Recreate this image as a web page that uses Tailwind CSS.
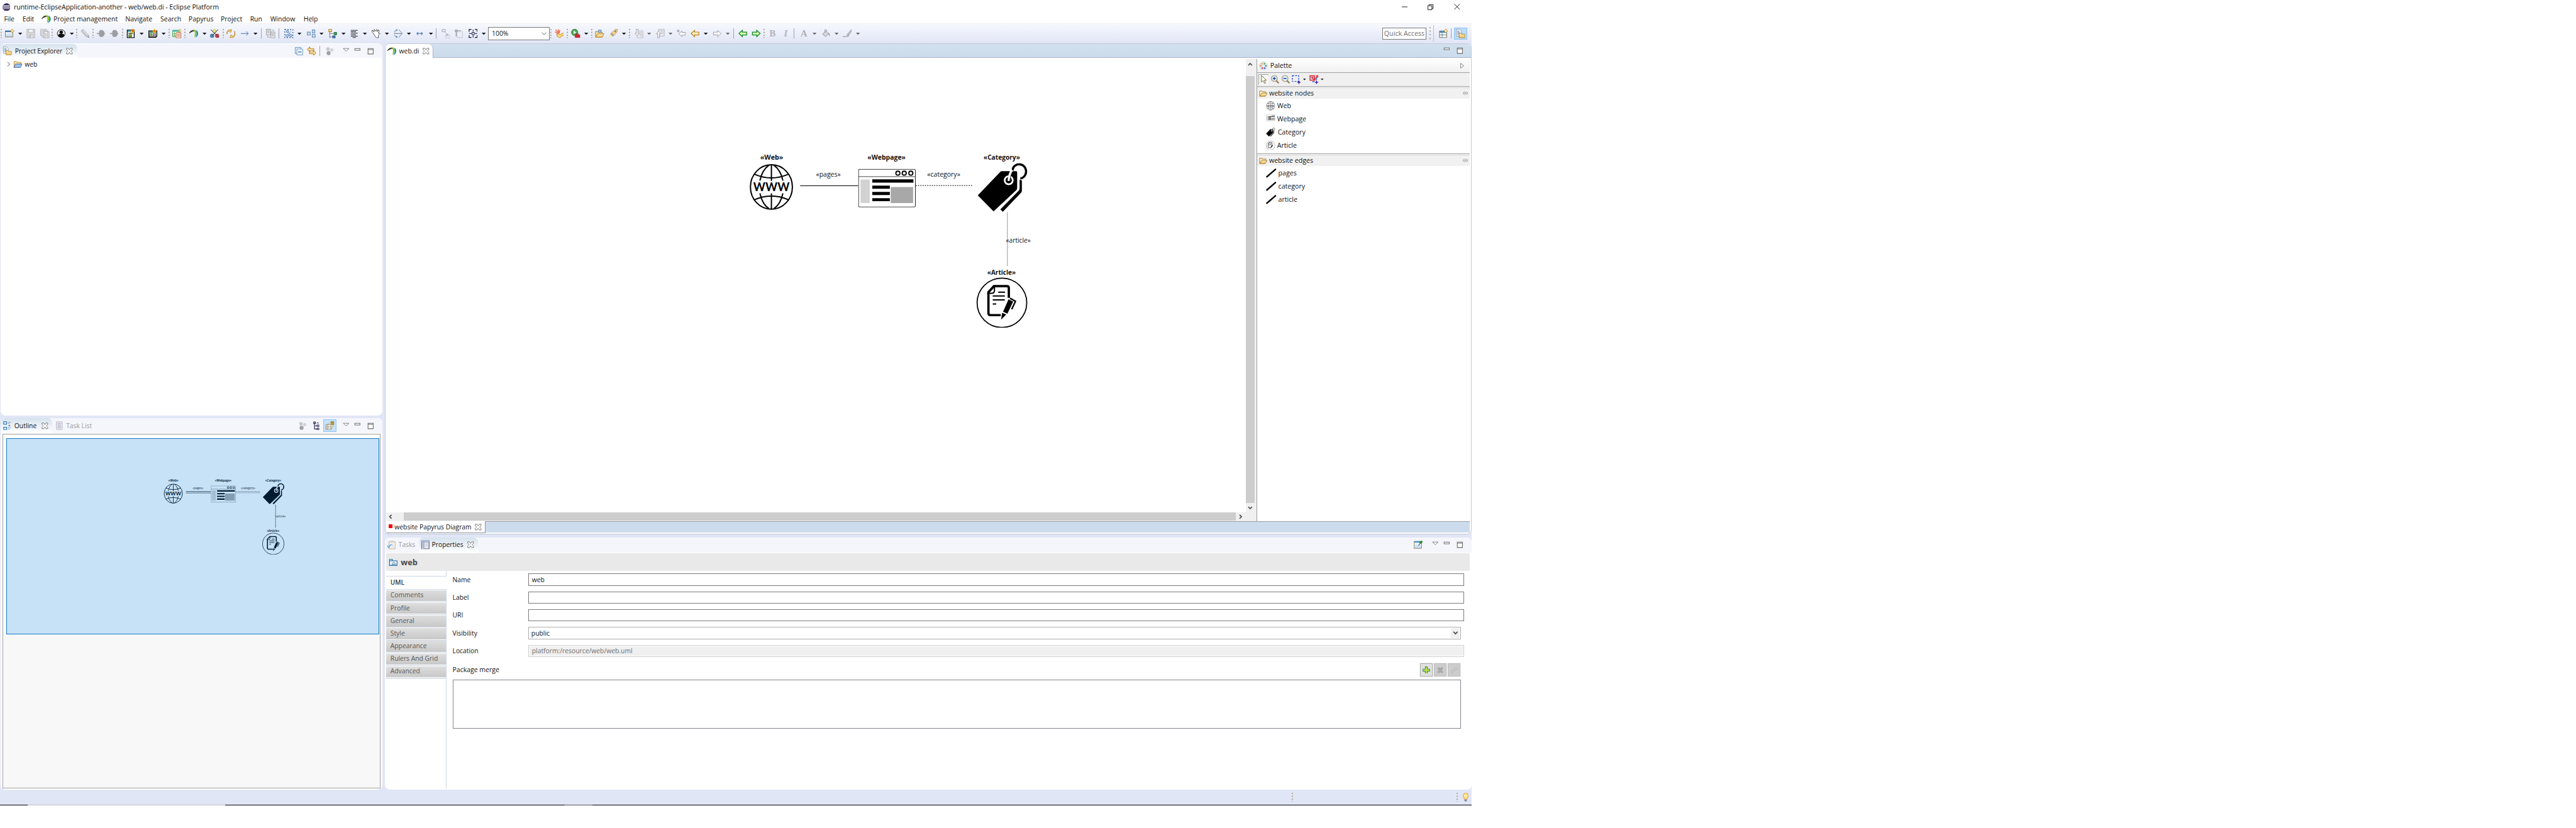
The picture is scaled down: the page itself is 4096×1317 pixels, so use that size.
<!DOCTYPE html>
<html lang="en">
<head>
<meta charset="utf-8">
<title>runtime-EclipseApplication-another - web/web.di - Eclipse Platform</title>
<script src="https://cdn.jsdelivr.net/npm/@tailwindcss/browser@4"></script>
</head>
<body class="bg-white overflow-hidden">
<!-- icon sprite -->
<svg width="0" height="0" class="absolute" aria-hidden="true">
<defs>
<linearGradient id="gold" x1="0" y1="0" x2="0" y2="1"><stop offset="0" stop-color="#fff3c8"/><stop offset="1" stop-color="#f0bf55"/></linearGradient>
<linearGradient id="sky" x1="0" y1="0" x2="0" y2="1"><stop offset="0" stop-color="#ffffff"/><stop offset="1" stop-color="#b9d3f0"/></linearGradient>
<symbol id="handle" viewBox="0 0 3 16"><g fill="#a39c86"><path d="M0 0h2v2H0zM0 5h2v2H0zM0 10h2v2H0zM0 14.500h2v1.500H0z"/></g></symbol>
<symbol id="sep" viewBox="0 0 1 18"><path d="M0 0h1v18H0z" fill="#8d909b"/></symbol>
<symbol id="arr" viewBox="0 0 7 4"><path d="M0 0h7L3.500 4z" fill="#1c1f26"/></symbol>
<symbol id="arrg" viewBox="0 0 7 4"><path d="M0 0h7L3.500 4z" fill="#6d6f76"/></symbol>
<symbol id="new" viewBox="0 0 16 16"><path d="M.5 3.500h13v10.500H.5z" fill="url(#sky)" stroke="#8d7a45"/><path d="M0 3h12v2.500H0z" fill="#3f73b5"/><path d="M12.500 0l1.300 2.200L16 3.500l-2.200 1.300L12.500 7l-1.300-2.200L9 3.500l2.200-1.300z" fill="#ffe9a0" stroke="#b08a2a" stroke-width=".8"/></symbol>
<symbol id="save" viewBox="0 0 16 16"><path d="M1 .5h13.500v15H1z" fill="#dcdcde" stroke="#aeb0b4"/><path d="M4 .5h8v6H4zM4.500 10.500h7v5h-7z" fill="#f4f4f5" stroke="#aeb0b4"/><path d="M6 11h2v4H6z" fill="#aeb0b4"/></symbol>
<symbol id="saveall" viewBox="0 0 16 16"><path d="M.5.5h10v11H.5z" fill="#e8e8ea" stroke="#b4b6ba"/><path d="M2.500 2.500h10v11h-10z" fill="#e8e8ea" stroke="#b4b6ba"/><path d="M5 4.500h10.500v11H5z" fill="#dcdcde" stroke="#aeb0b4"/><path d="M7.500 4.500h5.500v4H7.500zM8 12h5v3.500H8z" fill="#f4f4f5" stroke="#aeb0b4"/></symbol>
<symbol id="person" viewBox="0 0 16 16"><circle cx="8" cy="8" r="6.800" fill="#eee" stroke="#111" stroke-width="1"/><circle cx="8" cy="5.800" r="3" fill="#111"/><path d="M2.500 12c0-3 2.500-3.600 5.500-3.600s5.500.6 5.500 3.600C12 14 10 14.800 8 14.800S4 14 2.500 12z" fill="#111"/></symbol>
<symbol id="pencil" viewBox="0 0 16 16"><path d="M1 3.500L4.500.5l9 9.500 1.500 5-5-1.500z" fill="#c2c4c8" stroke="#9a9ca1" stroke-width=".8"/><path d="M3 2l9 9.500M5 1.500l8 9" stroke="#ededf0"/><path d="M13 13l3 3" stroke="#888"/></symbol>
<symbol id="oct" viewBox="0 0 16 16"><path d="M1 7h4V4l2-2h4l3 3v2h1.500v2H14v2l-3 3H7l-2-2V9H1z" fill="#9d9ea2"/></symbol>
<symbol id="blk" viewBox="0 0 16 16"><path d="M1.500 2h12v13.200h-12z" fill="#fff" stroke="#000" stroke-width="1.400"/><path d="M2 2.500h11V5H2z" fill="#2b8f9b"/><path d="M4 7h7v1.500H4zM4 10h5v4H4z" fill="#6dbb21" stroke="#111" stroke-width=".6"/><path d="M10.500 0v7M7.500 3.500h7" stroke="#ffb300" stroke-width="2"/><circle cx="10.800" cy="3.500" r="1.200" fill="#e0392b"/></symbol>
<symbol id="tbl" viewBox="0 0 16 16"><path d="M.8 3.500h14v9l-2 2H.8z" fill="#fff" stroke="#000" stroke-width="1.400"/><path d="M1.500 4h13v2.500h-13z" fill="#2b8f9b"/><path d="M3 7v7M6 7v7M9 7v7M12 7v7M1 9h13M1 12h13" stroke="#333" stroke-width=".9"/><path d="M3 7h3v2H3zM3 10h3v2H3z" fill="#9ac63c"/><path d="M10.500 0v7.500M7 3.800h7" stroke="#ffb300" stroke-width="2.200"/><circle cx="10.500" cy="3.800" r="1.200" fill="#e0392b"/></symbol>
<symbol id="tab2" viewBox="0 0 16 16"><path d="M.5 2.500h11v11H.5z" fill="#fff" stroke="#3a9a3a"/><path d="M0 2h12v3H0z" fill="#49b7a3"/><path d="M3.500 5v9M1 8h5M1 11h5" stroke="#5aa84c"/><path d="M6.500 6.500h8.500v9H6.500z" fill="#fff" stroke="#b2501f"/><path d="M8 9h5.500M8 11h5.500M8 13h5.500" stroke="#c4622f"/><path d="M13 0l1 2 2 1-2 1-1 2-1-2-2-1 2-1z" fill="#ffe08a" stroke="#b08a2a" stroke-width=".6"/></symbol>
<symbol id="pap" viewBox="0 0 16 16"><path d="M0 7.500C2.500 2.500 7 1.500 10 3.500 6.500 3.200 3 5 0 7.500z" fill="#222" stroke="#222" stroke-width=".8"/><path d="M6 1.800C10 .5 13 3 13 7c0 3.500-2.500 6.500-4 8 0-3 .8-5 .8-7.500C9.800 4.500 8.500 3 6 1.800z" fill="#97c11f"/><path d="M11.500 2c3 1 4.500 4 4 7-.4 2.800-2.500 5-5 6.200C12.500 11.500 14 7 11.500 2z" fill="#1d93bd"/></symbol>
<symbol id="balls" viewBox="0 0 16 16"><circle cx="7.500" cy="3.800" r="3" fill="#f3e28c" stroke="#b5a14a" stroke-width=".7"/><circle cx="3.500" cy="12" r="3.300" fill="#5b8fbd" stroke="#2e638f" stroke-width=".7"/><circle cx="12.300" cy="12" r="3.300" fill="#e0464c" stroke="#9c2328" stroke-width=".7"/><path d="M1 1l14.500 14M14 1L3 13" stroke="#222" stroke-width="1"/></symbol>
<symbol id="refresh" viewBox="0 0 16 16"><path d="M1 9V6.500C1 4 3.500 3.500 5.500 4.500L7.500 6 9 1.500 3.500 2C1.500 4 .5 6 1 9zM14.500 4v5c0 3-3 4-5 3L8 10l-1.500 5.500 6-1C15 12 16 8 14.500 4z" fill="#fbd97a" stroke="#b8801d" stroke-width="1"/></symbol>
<symbol id="right" viewBox="0 0 16 16"><path d="M1 8h13M10.500 4.500L14 8l-3.500 3.500" fill="none" stroke="#3a62a8"/></symbol>
<symbol id="copyd" viewBox="0 0 16 16"><path d="M.5.5H8v10H.5zM8.500 5.500h7v10h-7z" fill="#f2f2f4" stroke="#8f9196"/><path d="M2 3h4.500M2 5h4.500M2 7h4.500M10 8h4M10 10h4M10 12h4M3 12v2.500h4M10 2h3v2" stroke="#9c9ea3" fill="none"/></symbol>
<symbol id="selall" viewBox="0 0 16 16"><path d="M1 1h14v14H1z" fill="none" stroke="#2a5a9a" stroke-width="1.600" stroke-dasharray="2 2.600"/><path d="M4 3l8 9M12 4L5 12M5 12h7" stroke="#5480b5"/><circle cx="5" cy="11.500" r="2" fill="#cfe0f3" stroke="#4674ae"/><circle cx="11.500" cy="11.500" r="2" fill="#cfe0f3" stroke="#4674ae"/><circle cx="5.500" cy="4.500" r="1.800" fill="#cfe0f3" stroke="#4674ae"/></symbol>
<symbol id="boxes" viewBox="0 0 16 16"><path d="M.7 5.700h5v5h-5zM9.300 1.700h4.500v5H9.300zM9.300 9.300h5v5h-5z" fill="#cfe1f5" stroke="#6f93bd" stroke-width="1.300"/></symbol>
<symbol id="tree" viewBox="0 0 16 16"><path d="M1 .8h4.500v4H1z" fill="#fdf2b8" stroke="#a9832b" stroke-width="1.300"/><path d="M10 6h4.500v4.200H10z" fill="#3d9b55" stroke="#256c38"/><path d="M7.500 12H12v4H7.500z" fill="#4a7fc1" stroke="#2a5290"/><path d="M2.500 6v9M2.500 8H9M2.500 14H6" stroke="#333" stroke-dasharray="1.500 1"/></symbol>
<symbol id="lines" viewBox="0 0 16 16"><path d="M2 2.500h12M2 5h9M2 7.500h12M2 10h9M2 12.500h12M5 15h6" stroke="#222" stroke-width="1.100"/></symbol>
<symbol id="ghost" viewBox="0 0 16 16"><path d="M1 2l3 3.500L4.500.8l2 3 2.500-3 .5 4 2.500-3.500 1 3-1.500 3 3 .5-3 3.500.5 4H8L5.500 12 3 8 .7 5z" fill="#fff" stroke="#222" stroke-width="1" stroke-dasharray="2.500 .6"/></symbol>
<symbol id="flip" viewBox="0 0 16 16"><path d="M1 8h14" stroke="#111" stroke-dasharray="1.500 1.200" stroke-width="1.200"/><path d="M8.500 1L15 8l-6.500 7" fill="none" stroke="#5480b5"/><path d="M5.500 2C2.500 2.500 1.500 4 2 6M5.500 14C2.500 13.500 1.500 12 2 10M4 .5L6.500 2 4.500 4M4 15.500L6.500 14l-2-2" fill="none" stroke="#3a78b5"/></symbol>
<symbol id="lr" viewBox="0 0 16 16"><path d="M3 8h10M5.500 5.500L3 8l2.500 2.500M10.500 5.500L13 8l-2.500 2.500" fill="none" stroke="#3a72b5" stroke-width="1.100"/></symbol>
<symbol id="g1" viewBox="0 0 16 16"><path d="M1 1h5.500v4H1zM6 6l5 5M11 8v3H8" fill="none" stroke="#9b9da2"/><path d="M7.500 11h8v4.500h-8z" fill="none" stroke="#9b9da2" stroke-dasharray="1 1"/></symbol>
<symbol id="g2" viewBox="0 0 16 16"><path d="M1 2h3v3H1zM4 3h7M2.500 5v8" fill="none" stroke="#8e9095" stroke-width="1.200"/><path d="M4 5h9.500v10H4z" fill="none" stroke="#9b9da2" stroke-dasharray="1.500 1.500"/></symbol>
<symbol id="g3" viewBox="0 0 16 16"><path d="M1 5V1h4M11 1h4v4M15 11v4h-4M5 15H1v-4" fill="none" stroke="#111" stroke-width="1.300"/><path d="M6 6h4v4H6z" fill="none" stroke="#111"/><path d="M8 1v4M8 11v4M1 8h4M11 8h4" stroke="#2a2a9a" stroke-width="1.300"/></symbol>
<symbol id="burst" viewBox="0 0 16 16"><path d="M8 7L1.500 1.500M8 7L6 .5M8 7L.5 5.500M8 7L2.500 9M8 7l1-5" stroke="#ee6a45" stroke-width="1.500"/><path d="M4 10l3-2 1 2 3-1 4-2 1 2-2 3-3 1-2 3-2-2-3-1z" fill="#fbd97a" stroke="#bb8420" stroke-width=".9"/></symbol>
<symbol id="run" viewBox="0 0 16 16"><circle cx="6.300" cy="6" r="5.600" fill="#4ba551" stroke="#2c7a33" stroke-width=".9"/><path d="M4.500 3l4.500 3-4.500 3z" fill="#fff"/><path d="M7 10h8.500v5H7z" fill="#d2242a" stroke="#94151a" stroke-width=".6"/><path d="M9.500 10V8.500h3.500V10" fill="none" stroke="#94151a"/></symbol>
<symbol id="folder" viewBox="0 0 16 16"><path d="M1 14V4.500h4l1 1.500h7v2" fill="#fbe2a0" stroke="#a5792a"/><path d="M6 2h5v4H6z" fill="#a9c5e3" stroke="#5f83ab"/><path d="M1 14.500L4.500 8.500H16l-3.500 6z" fill="url(#gold)" stroke="#a5792a"/></symbol>
<symbol id="rocket" viewBox="0 0 16 16"><path d="M4.500 7L11 .8l4.200-.3-.3 4L9.500 11z" fill="#f7d08a" stroke="#b88a3f" stroke-width=".8"/><circle cx="11.500" cy="4.300" r="1.500" fill="#5b86b8"/><path d="M4 7l5 4.500-1.500 2-5-4.500z" fill="#9a9aa0"/><path d="M2.500 10L0 16l5.500-3z" fill="#ffe88f"/></symbol>
<symbol id="doc1" viewBox="0 0 16 16"><path d="M4.500 3.500h10v12h-10z" fill="#ececee" stroke="#b4b6ba"/><path d="M9 7h4M9 9.500h4M9 12h4" stroke="#b4b6ba"/><path d="M3 .5h3v7h2.500L4.500 12 .7 7.500H3z" fill="#f5f5f6" stroke="#9b9da2"/></symbol>
<symbol id="doc2" viewBox="0 0 16 16"><path d="M4.500.5h10v12h-10z" fill="#ececee" stroke="#b4b6ba"/><path d="M6 3h7M9 5.500h4M9 8h4" stroke="#b4b6ba"/><path d="M3 15.500h3v-7h2.500L4.500 4 .7 8.500H3z" fill="#f5f5f6" stroke="#9b9da2"/></symbol>
<symbol id="sback" viewBox="0 0 16 16"><path d="M3.500 8.500L9 3.500V6h6.500v5H9v2.500z" fill="#f5f5f6" stroke="#9b9da2"/><path d="M2.500 1v5M0 3.500h5M.8 1.800l3.500 3.500M4.300 1.800L.8 5.300" stroke="#8f9196" stroke-width=".8"/></symbol>
<symbol id="back" viewBox="0 0 16 16"><path d="M1 8l6-5.500V5.500h7.500v5H7v3z" fill="#fff0c0" stroke="#b8801d" stroke-width="1.300"/></symbol>
<symbol id="fwd" viewBox="0 0 16 16"><path d="M15 8L9 2.500V5.500H1.500v5H9v3z" fill="#f5f5f6" stroke="#9b9da2"/></symbol>
<symbol id="gback" viewBox="0 0 16 16"><path d="M1 8l6-5.500V5.500h7.500v5H7v3z" fill="#d6f7a8" stroke="#128a2c" stroke-width="1.400"/></symbol>
<symbol id="gfwd" viewBox="0 0 16 16"><path d="M15 8L9 2.500V5.500H1.500v5H9v3z" fill="#d6f7a8" stroke="#128a2c" stroke-width="1.400"/></symbol>
<symbol id="B" viewBox="0 0 16 16"><text x="8" y="13.500" text-anchor="middle" font-family="Liberation Serif, serif" font-weight="700" font-size="16" fill="#b0b1b6">B</text></symbol>
<symbol id="I" viewBox="0 0 16 16"><text x="8" y="13.500" text-anchor="middle" font-family="Liberation Serif, serif" font-style="italic" font-size="16" font-weight="700" fill="#b0b1b6">I</text></symbol>
<symbol id="A" viewBox="0 0 16 16"><text x="8" y="13.500" text-anchor="middle" font-family="Liberation Serif, serif" font-size="16" font-weight="700" fill="#aeb0b4">A</text></symbol>
<symbol id="bucket" viewBox="0 0 16 16"><path d="M2 9l6-5.500 5 5-5.500 5z" fill="#d2d3d7" stroke="#96989d"/><path d="M6 6V1.500h3v4" fill="none" stroke="#96989d"/><path d="M12 6.500c3 1 3 4 2.500 7-1-2-1-4-2.500-5z" fill="#96989d"/></symbol>
<symbol id="brush" viewBox="0 0 16 16"><path d="M15 1L9 8l2 2 4-5zM8.500 8.500L6 13.500l4-.5 1-2.500z" fill="#c2c4c8" stroke="#96989d" stroke-width=".8"/><path d="M0 13.500h5" stroke="#96989d" stroke-width="1.300"/></symbol>
<symbol id="persp" viewBox="0 0 16 16"><path d="M1 3.500h12.500v11.500H1z" fill="#fff" stroke="#6c6a4a"/><path d="M1 3.500h12.500v3H1z" fill="#4d84bd"/><path d="M5.500 6v9M1 10.500h12.500" stroke="#4f7f8a"/><path d="M12 0l1.300 2.200L15.500 3.500l-2.200 1.300L12 7l-1.300-2.200L8.500 3.500l2.200-1.300z" fill="#fff3c0" stroke="#b08a2a" stroke-width=".9"/></symbol>
<symbol id="projexp" viewBox="0 0 16 16"><path d="M.5.5h6l3 3v9h-9z" fill="#fff" stroke="#8a9ab5"/><path d="M2 3.500h4M2 5.500h5M2 7.500h4M2 9.500h3" stroke="#4a79b5"/><path d="M5.500 15.500V7.500h3l1 1.500h6v6.500z" fill="url(#gold)" stroke="#a5792a"/></symbol>
<symbol id="close" viewBox="0 0 16 16"><path d="M3 3h3l2 3 2-3h3v2.500L10.500 8l2.500 2.500V13h-3l-2-3-2 3H3v-2.500L5.500 8 3 5.500z" fill="#fff" stroke="#6c6c6c"/></symbol>
<symbol id="colall" viewBox="0 0 16 16"><path d="M1.500 1.500h10v11h-10z" fill="#e4eefa" stroke="#5e8fc0"/><path d="M4.500 4.500h10v10h-10z" fill="#fff" stroke="#5e8fc0"/><path d="M6.500 9.500h6" stroke="#1f5fa8" stroke-width="1.500"/></symbol>
<symbol id="link" viewBox="0 0 16 16"><path d="M.8 5L5 .8V3.500h7v3H5V9zM15.500 11l-4.200-4.200v2.700H4.500v3h6.800v3z" fill="#fff0c0" stroke="#b8801d" stroke-width="1.100"/></symbol>
<symbol id="gballs" viewBox="0 0 16 16"><circle cx="5" cy="4.500" r="3" fill="#c6c7c9"/><circle cx="11.500" cy="6" r="3" fill="#d4d5d7"/><circle cx="6" cy="11.500" r="3.500" fill="#9fa0a3"/></symbol>
<symbol id="menu" viewBox="0 0 16 16"><path d="M3 3.500h10L8 8z" fill="#fff" stroke="#777"/></symbol>
<symbol id="min" viewBox="0 0 16 16"><path d="M3.500 3.500h9v3h-9z" fill="#fff" stroke="#6c6c6c" stroke-width="1.100"/></symbol>
<symbol id="max" viewBox="0 0 16 16"><path d="M3.500 3.500h9v9.500h-9zM3.500 5.500h9" fill="#fff" stroke="#6c6c6c" stroke-width="1.200"/></symbol>
<symbol id="prj" viewBox="0 0 16 16"><path d="M1.500 13V3h4l1 1.500h7V8" fill="#fbe2a0" stroke="#b08a45"/><path d="M1 13.500L4 7.500h11.500l-3 6z" fill="#9fc0ea" stroke="#3d69a8"/></symbol>
<symbol id="outl" viewBox="0 0 16 16"><path d="M1 1h5v4H1zM1 10.500h5v4H1z" fill="#fff" stroke="#2d77b5" stroke-width="1.300"/><path d="M8 2h6M8 4h3M8 11h6M8 13.500h4" stroke="#8aa0bd"/><path d="M9.500 6.500H12v2H9.500z" fill="#2d77b5"/></symbol>
<symbol id="task" viewBox="0 0 16 16"><path d="M3 1h10v13l-2 1-1.500-1L8 15l-1.500-1L5 15l-2-1z" fill="#ecebf4" stroke="#b3b2c6"/><path d="M5 4h6M5 6.500h6M5 9h6M5 11.500h6" stroke="#a3a2bb"/></symbol>
<symbol id="otree" viewBox="0 0 16 16"><path d="M3 1.500h3v2.500H3zM4.500 4v9.500H9M4.500 8H9M9 6.500h3V9H9zM9 12h3v2.500H9z" fill="none" stroke="#222250" stroke-width="1.200"/><path d="M8 3h4" stroke="#222250"/></symbol>
<symbol id="ovw" viewBox="0 0 16 16"><path d="M1.500 6.500L11 1h3.500v6L10 14.500H1.500z" fill="#e9e2bd" stroke="#a39a6d" stroke-width=".7"/><path d="M1.500 6h8.500v9H1.500zM1.500 9H10M1.500 12H10M4.500 6v9" fill="#fff" stroke="#8f8d7a"/><path d="M10.500 1H15v4.500h-4.500zM12.700 1v4.500" fill="#ffe25a" stroke="#6b5c14"/></symbol>
<symbol id="taskp" viewBox="0 0 16 16"><path d="M3.500 2.500h11v13h-11z" fill="#efe0cd" stroke="#cfb38d"/><path d="M6 1h6v3H6z" fill="#c8d4e2"/><path d="M5.500 5h7.500v9H5.500z" fill="#fff"/><path d="M8 7h4M8 9.500h4M8 12h4" stroke="#a9bdd6"/><path d="M1 9.500l2.500 3.500L8 7" fill="none" stroke="#6fb4e2" stroke-width="2"/></symbol>
<symbol id="props" viewBox="0 0 16 16"><path d="M1.500 1.500h13v13.500h-13z" fill="#fff" stroke="#535a70" stroke-width="1.200"/><path d="M1.500 1.500h13V4h-13z" fill="#b9c4dd"/><path d="M2 4h3.500v11H2z" fill="#cdd6e8"/><path d="M5.500 2v13M2 4.500h12.500M2 7h12.500M2 9.500h12.500M2 12h12.500" stroke="#8d97b3" stroke-width=".8"/></symbol>
<symbol id="pkg" viewBox="0 0 16 16"><path d="M1.500 13.500V3h5v2.500h8v8zM1.500 5.500h6" fill="#eef5fc" stroke="#1c659e" stroke-width="1.200"/><path d="M5.500 11.500L9 7.500l3 4z" fill="#fff" stroke="#1c659e" stroke-width=".9"/></symbol>
<symbol id="pin" viewBox="0 0 16 16"><path d="M.5 2.500h13v12H.5z" fill="url(#sky)" stroke="#9b8a5c"/><path d="M.5 2h10v2.500H.5z" fill="#4f89cc"/><path d="M8 10l3-4" stroke="#333"/><path d="M9 4.500l3-3.500 3.500 1-1 3-3 2z" fill="#2e8b3a"/></symbol>
<symbol id="palt" viewBox="0 0 16 16"><circle cx="8" cy="8" r="7.300" fill="#e6eefa" stroke="#b4c8e4"/><circle cx="5.500" cy="4" r="1.500" fill="#f0a81c"/><circle cx="10" cy="4" r="1.500" fill="#4ca62f"/><circle cx="3.500" cy="8" r="1.500" fill="#e88718"/><circle cx="12.500" cy="8" r="1.500" fill="#3a9a2b"/><circle cx="6" cy="12" r="1.500" fill="#dc3535"/><circle cx="10.300" cy="12" r="1.500" fill="#2e62cf"/></symbol>
<symbol id="cursor" viewBox="0 0 16 16"><path d="M4 1v12l3-3 2.500 5 2-1L9 9.500h4z" fill="#fffbe8" stroke="#6d6541"/></symbol>
<symbol id="zin" viewBox="0 0 16 16"><path d="M10 10l4.500 4.500" stroke="#a07a4a" stroke-width="2.500"/><circle cx="6.800" cy="6.300" r="5.200" fill="#e3eefa" stroke="#96906e" stroke-width="1.200"/><path d="M4 6.300h5.500M6.800 3.500V9" stroke="#2549a5" stroke-width="1.600"/></symbol>
<symbol id="zout" viewBox="0 0 16 16"><path d="M10 10l4.500 4.500" stroke="#a07a4a" stroke-width="2.500"/><circle cx="6.800" cy="6.300" r="5.200" fill="#e3eefa" stroke="#96906e" stroke-width="1.200"/><path d="M4 6.300h5.500" stroke="#2549a5" stroke-width="1.600"/></symbol>
<symbol id="marq" viewBox="0 0 16 16"><path d="M1 1.500h11v10H1z" fill="none" stroke="#1a3fe0" stroke-width="1.300" stroke-dasharray="3 2"/><path d="M12.500 10v6M9.500 13h6" stroke="#2a1a8a" stroke-width="1.400"/></symbol>
<symbol id="marr" viewBox="0 0 16 16"><path d="M1 1.500h8v8H1z" fill="#c8d8fa" stroke="#e01818" stroke-width="1.400"/><path d="M3 4h4M5 4v4M9 8l4-5M12.500 1.500H15V4h-2.500zM7.500 6.500H10V9H7.500z" stroke="#e01818" stroke-width="1.200" fill="none"/><path d="M5 12h4M12.500 5v4" stroke="#1a3fe0" stroke-width="1.300"/><path d="M12.500 10v6M9.500 13h6" stroke="#2a1a8a" stroke-width="1.400"/></symbol>
<symbol id="ofold" viewBox="0 0 16 13"><path d="M1 12V2h4.500l1 1.500h6V6" fill="#fdf0cc" stroke="#9a6a1c"/><path d="M1 12L5 6h10.500l-4 6z" fill="url(#gold)" stroke="#9a6a1c"/></symbol>
<symbol id="edge" viewBox="0 0 18 16"><path d="M1.500 14.500L16.500 1.500" stroke="#000" stroke-width="2.600" stroke-linecap="round"/></symbol>
<symbol id="pinh" viewBox="0 0 10 7"><path d="M3.500.7L.8 3.500l2.700 2.800M6.500.7l2.700 2.800-2.700 2.800M3.500 3.500L5 2l1.500 1.500L5 5z" fill="none" stroke="#777" stroke-width=".9"/></symbol>
<symbol id="bulb" viewBox="0 0 12 16"><path d="M6 1a4.300 4.300 0 0 0-2.500 7.800V11h5V8.800A4.300 4.300 0 0 0 6 1z" fill="#ffe9a0" stroke="#eca93a" stroke-width="1.200"/><path d="M4 11.500h4V14l-1 1H5l-1-1z" fill="#7c8796"/></symbol>
<symbol id="upc" viewBox="0 0 16 16"><path d="M4.500 10L8 6.500 11.500 10" fill="none" stroke="#505050" stroke-width="2"/></symbol>
<symbol id="dnc" viewBox="0 0 16 16"><path d="M4.500 6.500L8 10l3.500-3.500" fill="none" stroke="#505050" stroke-width="2"/></symbol>
<symbol id="lfc" viewBox="0 0 16 16"><path d="M9.500 4.500L6 8l3.500 3.500" fill="none" stroke="#505050" stroke-width="2"/></symbol>
<symbol id="rtc" viewBox="0 0 16 16"><path d="M6.500 4.500L10 8l-3.500 3.500" fill="none" stroke="#505050" stroke-width="2"/></symbol>

<!-- diagram node pictures -->
<symbol id="n-web" viewBox="0 0 80 80"><g fill="none" stroke="#000" stroke-width="2.200"><ellipse cx="40" cy="40" rx="36.500" ry="38.700"/><path d="M10 17.500Q40 31 70 17.500M10 62.500Q40 49 70 62.500M40 1.500v28M40 51v28M36 2Q24 10 20 29M44 2Q56 10 60 29M36 78Q24 70 20 51M44 78Q56 70 60 51"/></g><text x="8.500" y="47.500" textLength="63" lengthAdjust="spacingAndGlyphs" font-family="Lato, sans-serif" font-weight="700" font-size="21" fill="#000">WWW</text></symbol>
<symbol id="n-page" viewBox="0 0 100 67"><rect x=".6" y=".6" width="98.800" height="65.800" rx="2" fill="#fff" stroke="#222" stroke-width="1.100"/><path d="M0 13.500h100" stroke="#333"/><g fill="#fff" stroke="#000" stroke-width="2"><circle cx="69" cy="7.500" r="3.500"/><circle cx="80" cy="7.500" r="3.500"/><circle cx="91.500" cy="7.500" r="3.500"/></g><path d="M4 18.500h16v41H4z" fill="#d2d2d2"/><path d="M56.500 31.500h39v28h-39z" fill="#a8a8a8"/><path d="M24.500 18.300H96v5.700H24.500zM24.500 29.300H55v5.400H24.500zM24.500 40.200H55v5.300H24.500zM24.500 51H55v5.300H24.500z" fill="#000"/></symbol>
<symbol id="n-tag" viewBox="0 0 88 86"><path d="M1 56L40 15.500Q41 14 43 14H67.500Q69.500 14 69.500 15.500V43Q69.500 45 68.500 46.500L28.500 84z" fill="#000"/><path d="M74 29l3.500 1.500V48q0 2-1.500 3.500L44.500 84.500 40.500 80.500 72.500 48q1.500-2 1.500-4z" fill="#000" stroke="#000" stroke-width=".5"/><path d="M61.500 13C62 4 70 1 76 2.500C84 4.500 87 14 83.500 20.500Q81 25.500 75 27" fill="none" stroke="#000" stroke-width="3.800"/><circle cx="54.800" cy="29.800" r="8.500" fill="#fff"/><circle cx="54.800" cy="29.800" r="5.500" fill="#000"/><path d="M55 31Q56 18 61 12" fill="none" stroke="#fff" stroke-width="4.500"/><path d="M56.500 31Q58 20 61.500 14" fill="none" stroke="#000" stroke-width=".8"/></symbol>
<symbol id="n-art" viewBox="0 0 90 88"><ellipse cx="45" cy="44.500" rx="43.200" ry="43" fill="#fff" stroke="#000" stroke-width="1.900"/><path d="M57 36V19q0-3.500-3.500-3.500H31L21.500 26v36.500q0 3.500 3.500 3.500h18" fill="none" stroke="#000" stroke-width="4"/><path d="M21 28L32 16v7q0 5-5 5z" fill="#fff" stroke="#000" stroke-width="2.200"/><path d="M38.500 26h12M29 32.700h21M29 39.500h21M29 46.500h6" stroke="#000" stroke-width="2.200"/><path d="M56.500 38.500l8 4-10 21-7.500-3.500zM45.500 62l7 3-9 9z" fill="#000"/><path d="M59 36.500l9.500 5.500L62 56" fill="none" stroke="#000" stroke-width="2.600"/></symbol>

<symbol id="diagram" viewBox="0 0 2600 1000" overflow="visible">
<g font-family="Open Sans, Noto Sans, sans-serif" font-size="11.700" fill="#111">
<use href="#n-web" x="1302" y="285.500" width="80" height="80"/>
<use href="#n-page" x="1493" y="294" width="100" height="67"/>
<use href="#n-tag" x="1700" y="284" width="88" height="86"/>
<use href="#n-art" x="1698" y="482.500" width="90" height="88"/>
<path d="M1392 323.500h101" stroke="#000" stroke-width="1.200"/>
<path d="M1593 323h98" stroke="#666" stroke-width="1.700" stroke-dasharray="2 2"/>
<path d="M1752.500 370v94" stroke="#222" stroke-width="1" stroke-dasharray="1 1"/>
<g font-weight="700">
<text x="1322.500" y="278" textLength="40" lengthAdjust="spacingAndGlyphs">«Web»</text>
<text x="1509" y="278" textLength="66.500" lengthAdjust="spacingAndGlyphs">«Webpage»</text>
<text x="1711" y="278" textLength="63.500" lengthAdjust="spacingAndGlyphs">«Category»</text>
<text x="1717.500" y="478" textLength="49.500" lengthAdjust="spacingAndGlyphs">«Article»</text>
</g>
<text x="1419.500" y="308" textLength="43" lengthAdjust="spacingAndGlyphs">«pages»</text>
<text x="1613" y="308" textLength="57.500" lengthAdjust="spacingAndGlyphs">«category»</text>
<text x="1750" y="422" textLength="43" lengthAdjust="spacingAndGlyphs">«article»</text>
</g>
</symbol>
</defs>
</svg>

<div class="[zoom:0.9142857] w-[4480px] h-[1440px] overflow-hidden bg-white text-[11.3px] leading-4 text-[#111] whitespace-nowrap font-['Open_Sans','Noto_Sans',sans-serif]">
<div class="w-[2559px] h-[1401px] flex flex-col bg-[#e1e6f6]">

  <!-- title bar -->
  <header class="h-[24px] bg-white flex items-center shrink-0">
    <svg class="w-[14px] h-[14px] ml-1" viewBox="0 0 14 14"><circle cx="7" cy="7" r="6.700" fill="#2c2255"/><path d="M1.500 4.500h11M1 7h12M1.500 9.500h11" stroke="#fff" stroke-width="1.200"/></svg>
    <span class="ml-[6px] text-[11.600px] tracking-[-0.050px]">runtime-EclipseApplication-another - web/web.di - Eclipse Platform</span>
    <svg class="ml-auto mr-[18px] w-[105px] h-[12px]" viewBox="0 0 105 12"><g fill="none" stroke="#111"><path d="M2 6.500h10"/><path d="M47.500 4.500h7v7h-7zM49.500 4.500v-2h7v7h-2"/><path d="M93.500 1.500l9.500 9.500M103 1.500L93.500 11"/></g></svg>
  </header>

  <!-- menu bar -->
  <nav class="h-[17px] bg-white flex items-center shrink-0 pl-[7px] pt-px text-[11.500px]">
    <span class="w-8">File</span><span class="w-[33px]">Edit</span>
    <svg class="w-[17px] h-[16px] mr-1"><use href="#pap"/></svg>
    <span class="w-[125px]">Project management</span><span class="w-[61px]">Navigate</span><span class="w-[49px]">Search</span><span class="w-[56px]">Papyrus</span><span class="w-[51px]">Project</span><span class="w-[35px]">Run</span><span class="w-[58px]">Window</span><span>Help</span>
  </nav>

  <!-- main toolbar -->
  <div class="h-[34px] shrink-0 border-t-2 border-[#f0f0f0] bg-linear-to-b from-[#f6f8fd] to-[#e1e6f6] flex items-center">
    <div class="flex items-center h-full" data-bar="0|1 handle,9 new,32 arr,46 save,70 saveall,90 handle,98 person,121 arr,133 handle,140 pencil,161 handle,168 oct,191 oct,212 handle,220 blk,243 arr,258 tbl,281 arr,293 handle,300 tab2,321 handle,329 pap,352 arr,366 balls,387 handle,394 refresh,418 right,441 arr,454 sep,463 copyd,485 sep,495 selall,518 arr,534 boxes,556 arr,571 tree,594 arr,609 lines,632 arr,647 ghost,670 arr,685 flip,708 arr,723 lr,746 arr,759 sep,768 g1,791 g2,815 g3,838 arr"></div>
    <div class="ml-1 w-[108px] h-[22px] bg-white border border-[#7a7a7a] flex items-center justify-between pl-[6px] pr-1">100%<svg class="w-[9px] h-[6px]" viewBox="0 0 9 6"><path d="M.7.7l3.800 4 3.800-4" fill="none" stroke="#555"/></svg></div>
    <div class="flex items-center h-full" data-bar="957|958 handle,965 burst,986 handle,994 run,1017 arr,1029 handle,1036 folder,1060 rocket,1083 arr,1095 handle,1104 doc1,1126 arrg,1142 doc2,1164 arrg,1178 sback,1202 back,1225 arr,1240 fwd,1263 arrg,1276 sep,1285 gback,1308 gfwd,1329 handle,1336 B,1359 I,1381 sep,1391 A,1414 arrg,1430 bucket,1452 arrg,1467 brush,1490 arrg"></div>
    <div class="ml-auto w-[76px] h-[21px] bg-white border border-[#7a7a7a] text-[#6d6d6d] flex items-center pl-[2px] text-[11.500px] tracking-[0.100px]">Quick Access</div>
    <svg class="w-[3px] h-[22px] ml-[6px]" viewBox="0 0 3 22"><path d="M0 0h2v2H0zM0 6h2v2H0zM0 12h2v2H0zM0 19h2v2H0z" fill="#a39c86"/></svg>
    <div class="w-[4px] h-[30px] ml-px border-r border-[#b8bfd4] rounded-br"></div>
    <svg class="w-4 h-4 ml-2"><use href="#persp"/></svg>
    <svg class="w-px h-[18px] ml-[5px]"><use href="#sep"/></svg>
    <div class="ml-[5px] mr-[7px] w-[23px] h-[21px] bg-[#bcdcfa] border border-[#90c2f0] flex items-center justify-center"><svg class="w-4 h-4"><use href="#projexp"/></svg></div>
  </div>

  <!-- workbench -->
  <main class="flex flex-1 min-h-0 pl-px gap-1">
    <!-- left column -->
    <div class="w-[664px] flex flex-col gap-1 shrink-0">
      <section class="h-[648px] rounded-lg bg-white overflow-hidden flex flex-col">
        <div class="h-[26px] bg-[#f5f6fb] border-t border-white flex items-center shrink-0">
          <div class="w-[133px] h-full rounded-t-lg bg-linear-to-b from-[#d5e2ee] to-white flex items-center pl-[5px]"><svg class="w-[15px] h-[15px]"><use href="#projexp"/></svg><span class="ml-[5px] w-[83px] tracking-[-0.100px]">Project Explorer</span><svg class="w-4 h-4 ml-[4px]"><use href="#close"/></svg></div>
          <div class="flex items-center h-full" data-bar="134|512 colall,534 link,556 sep,565 gballs,594 menu,614 min,637 max"></div>
        </div>
        <div class="flex items-center h-[22px]">
          <svg class="w-[6px] h-[9px] ml-[11px]" viewBox="0 0 6 9"><path d="M1 .8L4.800 4.500 1 8.200" fill="none" stroke="#a0a0a0" stroke-width="1.500"/></svg>
          <svg class="w-4 h-4 ml-[5px]"><use href="#prj"/></svg><span class="ml-1">web</span>
        </div>
      </section>
      <section class="flex-1 rounded-lg bg-white overflow-hidden flex flex-col">
        <div class="h-[27px] bg-[#f5f6fb] flex items-center shrink-0">
          <div class="w-[90px] h-full rounded-t-lg bg-linear-to-b from-[#d5e2ee] to-white flex items-center pl-[5px]"><svg class="w-4 h-4"><use href="#outl"/></svg><span class="ml-[3px] w-[40px]">Outline</span><svg class="w-4 h-4 ml-[5px]"><use href="#close"/></svg></div>
          <svg class="w-4 h-4 ml-[4px]"><use href="#task"/></svg><span class="ml-[4px] w-[48px] text-[#9a9a9e]">Task List</span>
          <div class="flex items-center h-full" data-bar="163|519 gballs,542 otree,562 hl,594 menu,614 min,637 max"></div>
        </div>
        <div class="mx-[3px] mt-px mb-[2px] w-[658px] flex-1 border border-[#a0a0a0] bg-[#f8f8f8] p-px">
          <div class="bg-white pt-[5px] pl-[5px]">
            <div class="w-[649px] h-[342px] border border-[#0f7bcb] relative overflow-hidden">
              <svg class="absolute inset-0 w-full h-full" viewBox="12 763 647 340"><g transform="translate(-281 717) scale(.434)"><use href="#diagram" width="2600" height="1000"/></g><path d="M323.500 855h43" stroke="#777" stroke-width="1.600"/><path d="M411 855h41M479.500 878v39" stroke="#777" stroke-width="1.400" stroke-dasharray="1.500 1"/></svg>
              <div class="absolute inset-0 bg-[#0078d7]/22"></div>
            </div>
          </div>
        </div>
      </section>
    </div>

    <!-- right column -->
    <div class="w-[1890px] flex flex-col gap-[5px]">
      <!-- editor -->
      <section class="h-[855px] rounded-lg border border-[#c3c8d4] bg-white overflow-hidden flex flex-col shrink-0">
        <div class="h-[25px] bg-linear-to-b from-[#d2e1ee] to-[#cbdbeb] border-b border-[#aab2cc] flex shrink-0">
          <div class="w-[84px] h-[25px] bg-white border-r border-[#aab2cc] rounded-tr-lg flex items-center pl-1"><svg class="w-4 h-4"><use href="#pap"/></svg><span class="ml-1 w-[35px]">web.di</span><svg class="w-4 h-4 ml-[4px]"><use href="#close"/></svg></div>
          <div class="flex items-center h-full" data-bar="754|2508 min,2531 max"></div>
        </div>
        <div class="flex flex-1 min-h-0 pt-[2px] pl-[2px] pr-[2px]">
          <div class="w-[1513px] flex flex-col">
            <div class="flex-1 flex min-h-0">
              <div class="flex-1 relative"><svg class="absolute inset-0 w-full h-full" viewBox="672 103 1495 788"><use href="#diagram" width="2600" height="1000"/></svg></div>
              <div class="w-[18px] bg-[#f0f0f0] flex flex-col items-start"><svg class="w-[15px] h-[18px]"><use href="#upc"/></svg><div class="w-[15px] flex-1 mt-[11px] bg-[#cdcdcd]"></div><svg class="w-[15px] h-[16px]"><use href="#dnc"/></svg></div>
            </div>
            <div class="h-4 bg-[#f0f0f0] flex items-start"><svg class="w-4 h-[15px]"><use href="#lfc"/></svg><div class="ml-[14px] w-[1447px] h-[15px] bg-[#cdcdcd]"></div><svg class="w-4 h-[15px]"><use href="#rtc"/></svg></div>
          </div>
          <!-- palette -->
          <aside class="flex-1 border-l border-[#9c9c9c] flex flex-col text-[11.600px]">
            <div class="h-[24px] bg-linear-to-b from-white to-[#f0f0f0] border-b border-[#a0a0a0] flex items-center pl-1"><svg class="w-[15px] h-[15px]"><use href="#palt"/></svg><span class="ml-1">Palette</span><svg class="ml-auto mr-[9px] w-[7px] h-[10px]" viewBox="0 0 7 10"><path d="M.7.7v8.600L6 5z" fill="#fff" stroke="#777"/></svg></div>
            <div class="h-[24px] bg-[#f0f0f0] border-b border-[#a0a0a0] flex items-center">
              <div class="w-[18px] h-[18px] ml-[2px] border-t border-l border-[#a0a0a0] bg-[#f7f7f7]"><svg class="w-4 h-4"><use href="#cursor"/></svg></div>
              <div class="flex items-center h-full" data-bar="2206|2209 zin,2228 zout,2246 marq,2266 mini,2277 marr,2297 mini"></div>
            </div>
            <div class="mt-px h-[20px] border-t border-[#d0d0d0] bg-[#f1f1f1] flex items-center pl-[3px]"><svg class="w-[15px] h-[12px]"><use href="#ofold"/></svg><span class="ml-[3px]">website nodes</span><svg class="ml-auto mr-[2px] w-[11px] h-[7px]"><use href="#pinh"/></svg></div>
            <div class="h-[96px] border-b border-[#a0a0a0] pl-4 pt-px">
              <div class="h-[22.700px] flex items-center gap-[3px]"><svg class="w-4 h-4"><use href="#n-web"/></svg>Web</div>
              <div class="h-[22.700px] flex items-center gap-[3px]"><svg class="w-4 h-[12px] mb-1"><use href="#n-page"/></svg>Webpage</div>
              <div class="h-[22.700px] flex items-center gap-1"><svg class="w-4 h-4"><use href="#n-tag"/></svg>Category</div>
              <div class="h-[22.700px] flex items-center gap-[3px]"><svg class="w-4 h-4"><use href="#n-art"/></svg>Article</div>
            </div>
            <div class="mt-px h-[20px] border-t border-[#d0d0d0] bg-[#f1f1f1] flex items-center pl-[3px]"><svg class="w-[15px] h-[12px]"><use href="#ofold"/></svg><span class="ml-[3px]">website edges</span><svg class="ml-auto mr-[2px] w-[11px] h-[7px]"><use href="#pinh"/></svg></div>
            <div class="pl-4 pt-px">
              <div class="h-[23px] flex items-center gap-[3px]"><svg class="w-[18px] h-4"><use href="#edge"/></svg>pages</div>
              <div class="h-[23px] flex items-center gap-[3px]"><svg class="w-[18px] h-4"><use href="#edge"/></svg>category</div>
              <div class="h-[23px] flex items-center gap-[3px]"><svg class="w-[18px] h-4"><use href="#edge"/></svg>article</div>
            </div>
          </aside>
        </div>
        <div class="h-[20px] ml-[2px] mr-[2px] mb-[2px] bg-[#cddcec] border-t border-[#9aa0ac] flex shrink-0">
          <div class="w-[172px] h-[20px] -mt-px bg-white border-r border-b border-[#8f949e] flex items-center pl-1"><i class="w-[6px] h-[6px] bg-[#f00] mb-[2px]"></i><span class="ml-1 w-[133px]">website Papyrus Diagram</span><svg class="w-4 h-4 ml-[5px]"><use href="#close"/></svg></div>
        </div>
      </section>

      <!-- properties -->
      <section class="flex-1 rounded-lg bg-white overflow-hidden flex flex-col">
        <div class="h-[26px] bg-[#f5f6fb] flex items-center shrink-0">
          <div class="w-[59px] flex items-center pl-1"><svg class="w-4 h-4"><use href="#taskp"/></svg><span class="ml-1 text-[#9a9a9e]">Tasks</span></div>
          <div class="w-[103px] h-full rounded-t-lg bg-linear-to-b from-[#d5e2ee] to-white flex items-center pl-1"><svg class="w-4 h-4"><use href="#props"/></svg><span class="ml-[3px] w-[54px]">Properties</span><svg class="w-4 h-4 ml-[5px]"><use href="#close"/></svg></div>
          <div class="flex items-center h-full" data-bar="831|2459 pin,2488 menu,2508 min,2531 max"></div>
        </div>
        <div class="h-[30px] mt-[2px] ml-[3px] mr-[3px] bg-[#e9e9e9] flex items-center pl-1 shrink-0"><svg class="w-4 h-4"><use href="#pkg"/></svg><b class="ml-[5px] text-[14px] text-[#484848]">web</b></div>
        <div class="flex flex-1 min-h-0 ml-[3px] mb-[3px]">
          <div class="w-[105px] flex flex-col text-[#555]">
            <div class="h-[10px] border-r border-b border-[#cdd5e6] shrink-0"></div>
            <div class="h-[22px] flex items-center pl-[7px] pb-px shrink-0 text-[#333] font-semibold text-[11px]">UML</div>
            <div class="flex-1 border-r border-[#cdd5e6]">
              <div class="h-[22px] border-t border-[#cdd5e6] py-px"><div class="h-full bg-linear-to-b from-[#dedede] to-[#c8c8c8] flex items-center pl-[7px] pb-[2px]">Comments</div></div>
              <div class="h-[22px] border-t border-[#cdd5e6] py-px"><div class="h-full bg-linear-to-b from-[#dedede] to-[#c8c8c8] flex items-center pl-[7px] pb-[2px]">Profile</div></div>
              <div class="h-[22px] border-t border-[#cdd5e6] py-px"><div class="h-full bg-linear-to-b from-[#dedede] to-[#c8c8c8] flex items-center pl-[7px] pb-[2px]">General</div></div>
              <div class="h-[22px] border-t border-[#cdd5e6] py-px"><div class="h-full bg-linear-to-b from-[#dedede] to-[#c8c8c8] flex items-center pl-[7px] pb-[2px]">Style</div></div>
              <div class="h-[22px] border-t border-[#cdd5e6] py-px"><div class="h-full bg-linear-to-b from-[#dedede] to-[#c8c8c8] flex items-center pl-[7px] pb-[2px]">Appearance</div></div>
              <div class="h-[22px] border-t border-[#cdd5e6] py-px"><div class="h-full bg-linear-to-b from-[#dedede] to-[#c8c8c8] flex items-center pl-[7px] pb-[2px]">Rulers And Grid</div></div>
              <div class="h-[22px] border-t border-[#cdd5e6] py-px"><div class="h-full bg-linear-to-b from-[#dedede] to-[#c8c8c8] flex items-center pl-[7px] pb-[2px]">Advanced</div></div>
              <div class="h-[2px] border-t border-[#cdd5e6] bg-[#eee]"></div>
            </div>
          </div>
          <div class="flex-1 pl-[10px] pt-[5px]">
            <div class="flex flex-col gap-[10px]">
              <div class="h-[21px] flex items-center"><span class="w-[132px]">Name</span><div class="w-[1627px] h-full border border-[#7a7a7a] flex items-center pl-[5px]">web</div></div>
              <div class="h-[21px] flex items-center"><span class="w-[132px]">Label</span><div class="w-[1627px] h-full border border-[#7a7a7a]"></div></div>
              <div class="h-[21px] flex items-center"><span class="w-[132px]">URI</span><div class="w-[1627px] h-full border border-[#7a7a7a]"></div></div>
              <div class="h-[21px] flex items-center"><span class="w-[132px]">Visibility</span><div class="w-[1622px] h-full border border-[#adadad] flex items-center justify-between pl-[4px] pr-px">public<div class="w-4 h-[17px] bg-[#f0f0f0]"><svg class="w-4 h-4"><use href="#dnc"/></svg></div></div></div>
              <div class="h-[21px] flex items-center"><span class="w-[132px]">Location</span><div class="w-[1627px] h-full border border-[#cccccc] p-px"><div class="h-full bg-[#f0f0f0] text-[#6d6d6d] flex items-center pl-[4px]">platform:/resource/web/web.uml</div></div></div>
            </div>
            <div class="mt-[10px] h-[25px] w-[1754px] flex items-center justify-between"><span class="text-[11.500px]">Package merge</span>
              <div class="flex gap-[2px] bg-[#f0f0f0] p-px">
                <div class="w-[22px] h-[23px] bg-[#e1e1e1] border border-[#adadad] flex items-center justify-center"><svg class="w-[13px] h-[13px]" viewBox="0 0 13 13"><path d="M4.700.7h3.600v4h4v3.600h-4v4H4.700v-4h-4V4.700h4z" fill="#c3db4b" stroke="#3c9a58" stroke-width="1.200"/></svg></div>
                <div class="w-[22px] h-[23px] bg-[#cccccc] border border-[#bfbfbf] flex items-center justify-center"><svg class="w-[13px] h-[13px]" viewBox="0 0 13 13"><path d="M2.500 2l8 9M10.500 2l-8 9" stroke="#aaa" stroke-width="4"/></svg></div>
                <div class="w-[22px] h-[23px] bg-[#cccccc] border border-[#bfbfbf] flex items-center justify-center"><svg class="w-[13px] h-[13px]" viewBox="0 0 13 13"><path d="M2 11L11 2" stroke="#a8a8a8" stroke-width="3.500"/><path d="M2 11L11 2" stroke="#ddd" stroke-width="1.500"/></svg></div>
              </div>
            </div>
            <div class="mt-[5px] w-[1754px] h-[85px] border border-[#828790]"></div>
          </div>
        </div>
      </section>
    </div>
  </main>

  <!-- status bar -->
  <footer class="h-[26px] shrink-0 flex items-center">
    <svg class="w-[3px] h-4 ml-[2247px]"><use href="#handle"/></svg>
    <svg class="w-[3px] h-4 ml-[283px]"><use href="#handle"/></svg>
    <svg class="w-[12px] h-4 ml-[7px]"><use href="#bulb"/></svg>
  </footer>
  <div class="h-px shrink-0 bg-black flex"><div class="ml-[48px] w-[344px] bg-[#c0c0c0]"></div><div class="ml-[590px] w-[48px] bg-[#555]"></div></div>
</div>
</div>

<script>
// Toolbars are listed as "startX|x icon,x icon,..."; the gap before each icon comes from its x.
const SIZE = { handle: [3, 16], sep: [1, 18], arr: [7, 4], arrg: [7, 4], mini: [5, 3], hl: [23, 21] };
document.querySelectorAll('[data-bar]').forEach(bar => {
  const [start, list] = bar.dataset.bar.split('|');
  let x = Number(start);
  bar.innerHTML = list.split(',').map(entry => {
    const [pos, name] = entry.split(' ');
    const [w, h] = SIZE[name] || [16, 16];
    const gap = pos - x;
    x = Number(pos) + w;
    const box = `style="margin-left:${gap}px;width:${w}px;height:${h}px"`;
    if (name === 'hl') return `<div class="shrink-0 bg-[#c5e1fb] border border-[#8ec5f5] flex items-center justify-center" ${box}><svg class="w-4 h-4"><use href="#ovw"/></svg></div>`;
    return `<svg class="shrink-0" ${box}><use href="#${name === 'mini' ? 'arr' : name}"/></svg>`;
  }).join('');
});
</script>
</body>
</html>
